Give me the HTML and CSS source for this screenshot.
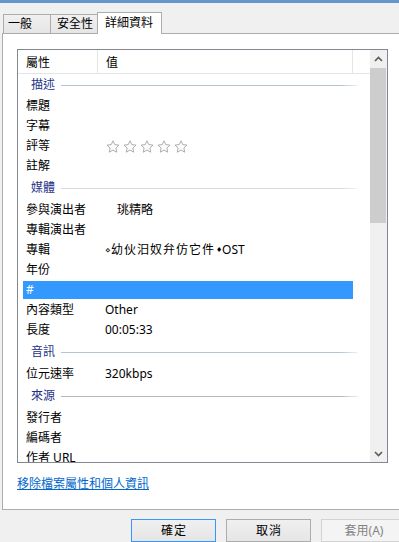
FILE: index.html
```html
<!DOCTYPE html>
<html lang="zh-Hant">
<head>
<meta charset="utf-8">
<title>內容</title>
<link rel="stylesheet" href="styles.css">
</head>
<body>
<div class="dialog">
  <div class="titlebar"></div>
  <div class="tabs">
    <div class="tab t1">一般</div>
    <div class="tab t2">安全性</div>
    <div class="tab t3 active">詳細資料</div>
  </div>
  <div class="panel">
    <div class="listview">
      <div class="lv-main">
        <div class="lv-header">
          <div class="hcell c1">屬性</div>
          <div class="hcell c2">值</div>
        </div>
        <div class="lv-body">
          <div class="group first"><span>描述</span><i class="gline"></i></div>
          <div class="row"><span class="lbl">標題</span><span class="val"></span></div>
          <div class="row"><span class="lbl">字幕</span><span class="val"></span></div>
          <div class="row"><span class="lbl">評等</span>
            <span class="val stars">
              <svg class="star" viewBox="0 0 14 13" width="14" height="13"><path d="M7 0.8 L8.8 4.6 L13 5.1 L9.9 8 L10.7 12.2 L7 10.1 L3.3 12.2 L4.1 8 L1 5.1 L5.2 4.6 Z"/></svg>
              <svg class="star" viewBox="0 0 14 13" width="14" height="13"><path d="M7 0.8 L8.8 4.6 L13 5.1 L9.9 8 L10.7 12.2 L7 10.1 L3.3 12.2 L4.1 8 L1 5.1 L5.2 4.6 Z"/></svg>
              <svg class="star" viewBox="0 0 14 13" width="14" height="13"><path d="M7 0.8 L8.8 4.6 L13 5.1 L9.9 8 L10.7 12.2 L7 10.1 L3.3 12.2 L4.1 8 L1 5.1 L5.2 4.6 Z"/></svg>
              <svg class="star" viewBox="0 0 14 13" width="14" height="13"><path d="M7 0.8 L8.8 4.6 L13 5.1 L9.9 8 L10.7 12.2 L7 10.1 L3.3 12.2 L4.1 8 L1 5.1 L5.2 4.6 Z"/></svg>
              <svg class="star" viewBox="0 0 14 13" width="14" height="13"><path d="M7 0.8 L8.8 4.6 L13 5.1 L9.9 8 L10.7 12.2 L7 10.1 L3.3 12.2 L4.1 8 L1 5.1 L5.2 4.6 Z"/></svg>
            </span>
          </div>
          <div class="row"><span class="lbl">註解</span><span class="val"></span></div>
          <div class="group"><span>媒體</span><i class="gline light"></i></div>
          <div class="row"><span class="lbl">參與演出者</span><span class="val indent">珧精略</span></div>
          <div class="row"><span class="lbl">專輯演出者</span><span class="val"></span></div>
          <div class="row"><span class="lbl">專輯</span><span class="val"><span class="dm">⋄</span><span class="moji">幼伙汨奴弁仿它件</span><span class="dm2">♦</span>OST</span></div>
          <div class="row"><span class="lbl">年份</span><span class="val"></span></div>
          <div class="row sel"><span class="lbl">#</span><span class="val"></span></div>
          <div class="row"><span class="lbl">內容類型</span><span class="val">Other</span></div>
          <div class="row"><span class="lbl">長度</span><span class="val">00:05:33</span></div>
          <div class="group"><span>音訊</span><i class="gline"></i></div>
          <div class="row"><span class="lbl">位元速率</span><span class="val">320kbps</span></div>
          <div class="group"><span>來源</span><i class="gline grey"></i></div>
          <div class="row"><span class="lbl">發行者</span><span class="val"></span></div>
          <div class="row"><span class="lbl">編碼者</span><span class="val"></span></div>
          <div class="row"><span class="lbl">作者 URL</span><span class="val"></span></div>
        </div>
      </div>
      <div class="scrollbar">
        <div class="sb-btn">
          <svg width="9" height="6" viewBox="0 0 9 6"><polyline points="1,5 4.5,1.5 8,5" /></svg>
        </div>
        <div class="sb-track"><div class="sb-thumb"></div></div>
        <div class="sb-btn">
          <svg width="9" height="6" viewBox="0 0 9 6"><polyline points="1,1 4.5,4.5 8,1" /></svg>
        </div>
      </div>
    </div>
    <a class="link" href="#">移除檔案屬性和個人資訊</a>
  </div>
  <div class="buttons">
    <button class="btn default">確定</button>
    <button class="btn">取消</button>
    <button class="btn disabled">套用(A)</button>
  </div>
</div>
</body>
</html>
```

FILE: styles.css
```css
html, body {
  margin: 0;
  padding: 0;
  overflow: hidden;
}
body {
  width: 399px;
  height: 542px;
  background: #f0f0f0;
  font-family: "Noto Sans", "Noto Sans CJK TC", sans-serif;
  font-size: 12px;
  color: #000;
}
.dialog {
  width: 399px;
  height: 542px;
  overflow: hidden;
}
.titlebar {
  height: 3px;
  background: #6396cf;
}
.tabs {
  display: flex;
  align-items: flex-end;
  height: 30px;
  padding-left: 3px;
}
.tab {
  box-sizing: border-box;
  height: 19px;
  border: 1px solid #acacac;
  border-bottom: none;
  background: linear-gradient(#f0f0f0, #e5e5e5);
  line-height: 18px;
  font-size: 12px;
  white-space: nowrap;
}
.t1 { width: 48px; padding-left: 4px; }
.t2 { width: 48px; padding-left: 6px; margin-left: -1px; }
.t3 { width: 65px; padding-left: 7px; margin-left: -1px; }
.tab.active {
  position: relative;
  z-index: 1;
  height: 22px;
  margin-bottom: -1px;
  background: #fff;
  line-height: 19px;
}
.panel {
  box-sizing: border-box;
  margin-left: 2px;
  width: 402px;
  height: 477px;
  border: 1px solid #acacac;
  background: #fff;
  padding: 15px 0 0 14px;
}
.listview {
  box-sizing: border-box;
  width: 371px;
  height: 414px;
  border: 1px solid #828790;
  display: flex;
}
.lv-main {
  flex: 1;
  overflow: hidden;
}
.lv-header {
  box-sizing: border-box;
  display: flex;
  height: 24px;
  border-bottom: 1px solid #e5e5e5;
  background: #fff;
}
.hcell {
  box-sizing: border-box;
  border-right: 1px solid #e5e5e5;
  padding: 3px 0 0 8px;
  line-height: 20px;
}
.hcell.c1 { width: 80px; }
.hcell.c2 { width: 255px; }
.group {
  box-sizing: border-box;
  width: 340px;
  height: 24px;
  padding-left: 13px;
  display: flex;
  align-items: center;
  color: #1e3287;
  line-height: 20px;
}
.group.first { height: 22px; }
.gline {
  flex: 1;
  height: 1px;
  margin-left: 6px;
  background: linear-gradient(90deg, #b4c4d6 94%, #eef2f6);
}
.gline.light {
  background: linear-gradient(90deg, #d3dbe3 94%, #f3f5f7);
}
.gline.grey {
  background: linear-gradient(90deg, #b3b8bd 94%, #eef0f2);
}
.row {
  box-sizing: border-box;
  display: flex;
  align-items: center;
  width: 330px;
  height: 20px;
  padding: 1px 0;
  margin-left: 5px;
  background-clip: content-box;
  line-height: 18px;
  white-space: nowrap;
}
.row.sel {
  background-color: #3399ff;
  color: #fff;
}
.lbl {
  box-sizing: border-box;
  width: 82px;
  padding-left: 3px;
  flex: none;
}
.val {
  flex: 1;
  display: flex;
  align-items: center;
}
.val.indent { padding-left: 12px; }
.stars {
  gap: 3px;
  padding-left: 1px;
}
.star {
  display: block;
  fill: #fbfbfb;
  stroke: #a6a6a6;
  stroke-width: 0.9;
  stroke-linejoin: round;
}
.dm {
  font-family: "DejaVu Sans", sans-serif;
  font-size: 9px;
  width: 6px;
}
.moji {
  letter-spacing: 1px;
}
.dm2 {
  font-family: "DejaVu Sans", sans-serif;
  font-size: 7px;
  width: 6px;
  padding-left: 1px;
}
.scrollbar {
  width: 17px;
  flex: none;
  background: #f0f0f0;
  display: flex;
  flex-direction: column;
}
.sb-btn {
  height: 17px;
  display: flex;
  align-items: center;
  justify-content: center;
}
.sb-btn svg {
  fill: none;
  stroke: #5a5a5a;
  stroke-width: 1.6;
}
.sb-track {
  flex: 1;
  padding: 1px 1px 0 0;
}
.sb-thumb {
  height: 155px;
  background: #cdcdcd;
}
.link {
  display: inline-block;
  margin-top: 13px;
  line-height: 16px;
  color: #0066cc;
  text-decoration: underline;
}
.buttons {
  display: flex;
  gap: 10px;
  margin-top: 9px;
  padding-left: 131px;
}
.btn {
  flex: none;
  box-sizing: border-box;
  width: 85px;
  height: 23px;
  margin: 0;
  padding: 0 0 0 1px;
  border: 1px solid #acacac;
  background: linear-gradient(#f0f0f0, #e5e5e5);
  font-family: "Noto Sans", "Noto Sans CJK TC", sans-serif;
  font-size: 12px;
  line-height: 21px;
  letter-spacing: 1px;
  color: #000;
  text-align: center;
}
.btn.default {
  border-color: #3399ff;
}
.btn.disabled {
  background: #f4f4f4;
  border-color: #d2d2d2;
  color: #838383;
  letter-spacing: 0;
}
```
